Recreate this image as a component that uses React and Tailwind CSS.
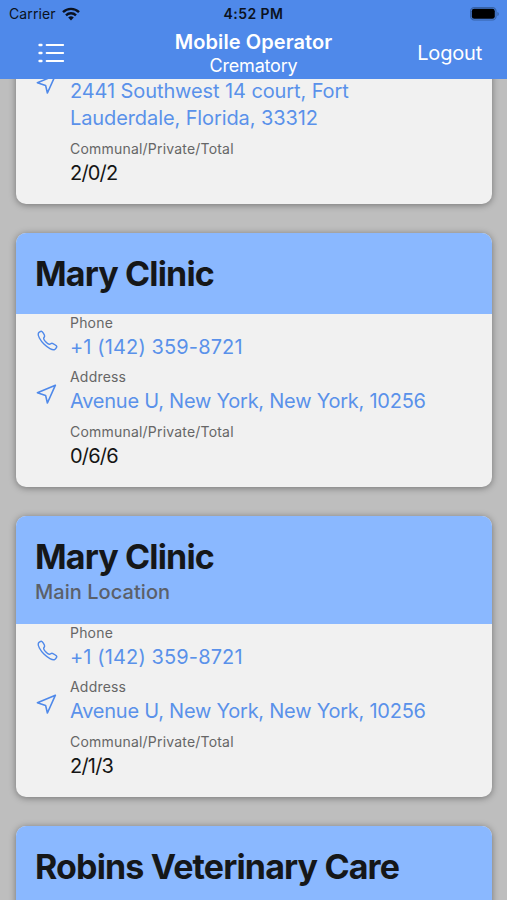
import React from "react";
import { IoCallOutline } from "react-icons/io5";

const clinics = [
    {
        id: 1,
        name: "Mary Clinic",
        phone: "+1 (142) 359-8721",
        address: ["2441 Southwest 14 court, Fort", "Lauderdale, Florida, 33312"],
        addressClass: "tracking-[-0.1px]",
        counts: "2/0/2",
    },
    {
        id: 2,
        name: "Mary Clinic",
        phone: "+1 (142) 359-8721",
        address: ["Avenue U, New York, New York, 10256"],
        addressClass: "tracking-[-0.24px]",
        counts: "0/6/6",
    },
    {
        id: 3,
        name: "Mary Clinic",
        location: "Main Location",
        phone: "+1 (142) 359-8721",
        address: ["Avenue U, New York, New York, 10256"],
        addressClass: "tracking-[-0.24px]",
        counts: "2/1/3",
    },
    {
        id: 4,
        name: "Robins Veterinary Care",
        phone: "+1 (142) 359-8721",
        address: ["Avenue U, New York, New York, 10256"],
        addressClass: "tracking-[-0.24px]",
        counts: "1/1/2",
    },
];

function WifiIcon() {
    return (
        <svg width="18" height="14" viewBox="0 0 18 14" fill="none" stroke="#0b1220" strokeWidth="2.4">
            <path d="M1 5.2a11.4 11.4 0 0 1 16 0" />
            <path d="M4 8.3a7.2 7.2 0 0 1 10 0" />
            <path d="M9 13.4 6.2 10.5a4 4 0 0 1 5.6 0z" fill="#0b1220" stroke="none" />
        </svg>
    );
}

function BatteryIcon() {
    return (
        <svg width="30" height="14" viewBox="0 0 30 14" fill="none">
            <rect x="0.6" y="0.6" width="25.4" height="12.4" rx="3.6" stroke="#3763a8" strokeWidth="1.2" />
            <rect x="1.8" y="1.8" width="23" height="10" rx="2.4" fill="#000" />
            <path d="M27.4 5v4c.9-.3 1.4-1.1 1.4-2s-.5-1.7-1.4-2z" fill="#3763a8" />
        </svg>
    );
}

function ListIcon() {
    return (
        <svg width="28" height="22" viewBox="0 0 28 22" fill="none" stroke="#fff" strokeWidth="1.9" strokeLinecap="round">
            <path d="M2.6 3h1.8M2.6 11h1.8M2.6 19h1.8" strokeWidth="2.5" />
            <path d="M9.6 3h16.6M9.6 11h16.6M9.6 19h16.6" />
        </svg>
    );
}

function NavigateIcon() {
    return (
        <svg width="24" height="24" viewBox="0 0 24 24" fill="none" stroke="currentColor" strokeWidth="1.6" strokeLinejoin="round">
            <path d="M20.4 2.2 2.4 9.8l8.2 2.600 1.800 7.600z" />
        </svg>
    );
}

function Appbar() {
    return (
        <div className="relative z-10 h-[79px] bg-[#4f89ea]">
            <div className="grid h-[27px] grid-cols-3 items-center px-[9px] text-[14px] text-[#0b1220]">
                <div className="flex items-center gap-[6px]">
                    <span className="tracking-[0.1px]">Carrier</span>
                    <WifiIcon />
                </div>
                <div className="text-center text-[14px] font-semibold tracking-[0.45px]">4:52 PM</div>
                <div className="-mr-[2px] flex justify-end">
                    <BatteryIcon />
                </div>
            </div>
            <div className="grid h-[52px] grid-cols-3 items-center text-white">
                <div className="pl-[37px]">
                    <ListIcon />
                </div>
                <div className="whitespace-nowrap text-center">
                    <div className="text-[20px] font-semibold leading-6 tracking-[0.08px]">Mobile Operator</div>
                    <div className="text-[18px] leading-[23px] tracking-[-0.2px]">Crematory</div>
                </div>
                <div className="pb-[1px] pr-[25px] text-right text-[20px] tracking-[-0.2px]">Logout</div>
            </div>
        </div>
    );
}

function Field({ label, icon, lines, className }) {
    return (
        <div className="flex items-start">
            <div className="w-[35px] shrink-0 pt-[15px] text-[23px] text-[#4f89ea]">{icon}</div>
            <div>
                <div className="mb-[2px] text-[14px] leading-[18px] tracking-[0.2px] text-[#666]">{label}</div>
                {lines.map((line) => (
                    <div key={line} className={"whitespace-nowrap text-[20px] leading-[27px] " + className}>
                        {line}
                    </div>
                ))}
            </div>
        </div>
    );
}

function ClinicCard({ clinic }) {
    return (
        <div className="shrink-0 overflow-hidden rounded-[10px] bg-[#f1f1f1] shadow-[0_1px_7px_rgba(0,0,0,0.4)]">
            <div className="bg-[#8ab8ff] px-[19.5px] pb-[19px] pt-[20px]">
                <div className="whitespace-nowrap text-[34px] font-bold leading-[42px] tracking-[-0.85px] text-[#151719]">
                    {clinic.name}
                </div>
                {clinic.location && (
                    <div className="pt-[1px] text-[20px] font-medium leading-[26px] tracking-[0.05px] text-[#5b6069]">
                        {clinic.location}
                    </div>
                )}
            </div>
            <div className="flex flex-col gap-[7.3px] pb-[17.4px] pl-[19.5px]">
                <Field
                    label="Phone"
                    icon={<IoCallOutline className="ml-[1px]" />}
                    lines={[clinic.phone]}
                    className="tracking-[0.12px] text-[#5a91ea]"
                />
                <Field
                    label="Address"
                    icon={<NavigateIcon />}
                    lines={clinic.address}
                    className={clinic.addressClass + " text-[#5a91ea]"}
                />
                <Field
                    label="Communal/Private/Total"
                    lines={[clinic.counts]}
                    className="tracking-[-0.8px] text-[#151515]"
                />
            </div>
        </div>
    );
}

export default function App() {
    return (
        <div className="flex h-[900px] w-[507px] flex-col overflow-hidden bg-[#bebebe] font-['Inter',sans-serif]">
            <Appbar />
            <div className="flex min-h-0 flex-1 flex-col overflow-hidden">
                <div className="-mt-[156px] flex flex-col gap-[29px] px-[15px] pl-[15.5px]">
                    {clinics.map((clinic) => (
                        <ClinicCard key={clinic.id} clinic={clinic} />
                    ))}
                </div>
            </div>
        </div>
    );
}
